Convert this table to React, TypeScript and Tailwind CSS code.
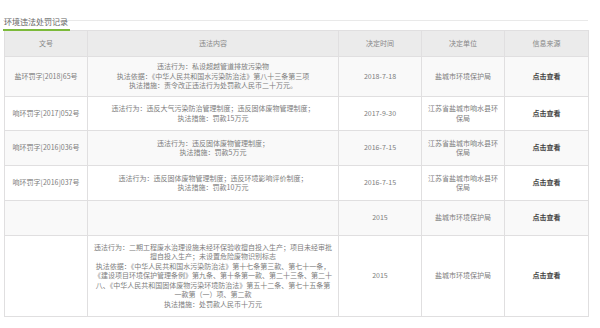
const font = { fontFamily: '"Noto Sans CJK SC", "Noto Sans", sans-serif' };

interface Row {
  no: string;
  content: string[];
  date: string;
  unit: string[];
  height: string;
}

const rows: Row[] = [
  {
    no: "盐环罚字[2018]65号",
    content: [
      "违法行为：私设超越管道排放污染物",
      "执法依据：《中华人民共和国水污染防治法》第八十三条第三项",
      "执法措施：责令改正违法行为处罚款人民币二十万元。",
    ],
    date: "2018-7-18",
    unit: ["盐城市环境保护局"],
    height: "h-[40px]",
  },
  {
    no: "响环罚字[2017]052号",
    content: ["违法行为：违反大气污染防治管理制度；违反固体废物管理制度；", "执法措施：罚款15万元"],
    date: "2017-9-30",
    unit: ["江苏省盐城市响水县环", "保局"],
    height: "h-[34px]",
  },
  {
    no: "响环罚字[2016]036号",
    content: ["违法行为：违反固体废物管理制度；", "执法措施：罚款5万元"],
    date: "2016-7-15",
    unit: ["江苏省盐城市响水县环", "保局"],
    height: "h-[35px]",
  },
  {
    no: "响环罚字[2016]037号",
    content: ["违法行为：违反固体废物管理制度；违反环境影响评价制度；", "执法措施：罚款10万元"],
    date: "2016-7-15",
    unit: ["江苏省盐城市响水县环", "保局"],
    height: "h-[35px]",
  },
  {
    no: "",
    content: [],
    date: "2015",
    unit: ["盐城市环境保护局"],
    height: "h-[35px]",
  },
  {
    no: "",
    content: [
      "违法行为：二期工程废水治理设施未经环保验收擅自投入生产；项目未经审批",
      "擅自投入生产；未设置危险废物识别标志",
      "执法依据：《中华人民共和国水污染防治法》第十七条第三款、第七十一条，",
      "《建设项目环境保护管理条例》第九条、第十条第一款、第二十三条、第二十",
      "八、《中华人民共和国固体废物污染环境防治法》第五十二条、第七十五条第",
      "一款第（一）项、第二款",
      "执法措施：处罚款人民币十万元",
    ],
    date: "2015",
    unit: ["盐城市环境保护局"],
    height: "h-[81px]",
  },
];

const cell = "border border-[#e0dfe0] text-center align-middle px-[4px]";

export default function App() {
  return (
    <div className="w-[600px] h-[328px] bg-white overflow-hidden" style={font}>
      <div className="ml-[3px] w-[585px] pt-[6px]">
        {/* Title */}
        <div className="border-b border-[#e9e9e9] h-[15px]">
          <span className="inline-block h-[15px] border-b-2 border-[#7cba3b] pl-[1px] pr-[2px] text-[8px] leading-[11px] text-[#666]">
            环境违法处罚记录
          </span>
        </div>

        {/* Table */}
        <table className="mt-[9px] ml-[1px] w-[584px] border-collapse table-fixed text-[7px] leading-[9.5px] text-[#7d7d7d]">
          <colgroup>
            <col className="w-[83px]" />
            <col className="w-[251px]" />
            <col className="w-[83px]" />
            <col className="w-[83px]" />
            <col className="w-[84px]" />
          </colgroup>
          <thead>
            <tr className="h-[26px] bg-[#ebebeb]">
              {["文号", "违法内容", "决定时间", "决定单位", "信息来源"].map((h) => (
                <th key={h} className={`${cell} font-normal text-[#888]`}>
                  {h}
                </th>
              ))}
            </tr>
          </thead>
          <tbody>
            {rows.map((r, i) => (
              <tr key={i} className={`${r.height} ${i % 2 === 0 ? "bg-[#f9f9f9]" : "bg-white"}`}>
                <td className={cell}>{r.no}</td>
                <td className={cell}>
                  {r.content.map((line) => (
                    <div key={line} className="whitespace-nowrap">
                      {line}
                    </div>
                  ))}
                </td>
                <td className={cell}>{r.date}</td>
                <td className={cell}>
                  {r.unit.map((line) => (
                    <div key={line}>{line}</div>
                  ))}
                </td>
                <td className={`${cell} font-semibold text-[#444]`}>点击查看</td>
              </tr>
            ))}
          </tbody>
        </table>
      </div>
    </div>
  );
}
